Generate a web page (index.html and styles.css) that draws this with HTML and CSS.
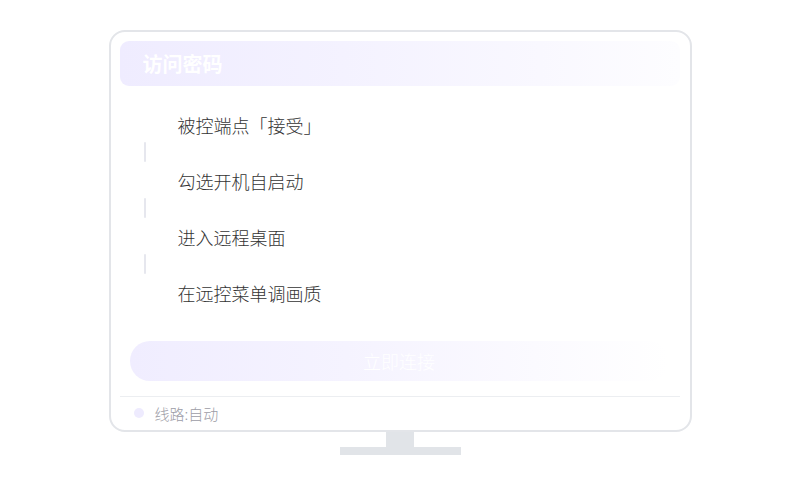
FILE: index.html
```html
<!DOCTYPE html>
<html lang="zh">
<head>
<meta charset="utf-8">
<link rel="stylesheet" href="styles.css">
</head>
<body>
<div class="page">
  <div class="monitor">
    <div class="pwd-bar"><span class="pwd-label">访问密码</span></div>
    <div class="steps">
      <div class="step">被控端点「接受」</div>
      <div class="connector"><span class="line"></span></div>
      <div class="step">勾选开机自启动</div>
      <div class="connector"><span class="line"></span></div>
      <div class="step">进入远程桌面</div>
      <div class="connector"><span class="line"></span></div>
      <div class="step">在远控菜单调画质</div>
    </div>
    <div class="connect-btn">立即连接</div>
    <div class="divider"></div>
    <div class="footer"><span class="dot"></span><span class="route">线路:自动</span></div>
  </div>
  <div class="neck"></div>
  <div class="base"></div>
</div>
</body>
</html>
```
FILE: styles.css
```css
* { box-sizing: border-box; }
html, body { margin: 0; padding: 0; background: #ffffff; }
body { font-family: "Noto Sans CJK SC", "Noto Sans", sans-serif; }
.page {
  width: 800px;
  height: 500px;
  display: flex;
  flex-direction: column;
  align-items: center;
  padding-top: 30px;
}
.monitor {
  width: 583px;
  height: 402px;
  border: 2px solid #e3e5e9;
  border-radius: 16px;
  padding: 9px 10px 0 9px;
  display: flex;
  flex-direction: column;
  background: #fff;
}
.pwd-bar {
  height: 45px;
  border-radius: 9px;
  background: linear-gradient(90deg, #efecff 0%, #f4f2ff 40%, #f9f8ff 75%, #fdfdff 100%);
  display: flex;
  align-items: center;
  padding-left: 23px;
}
.pwd-label {
  color: #ffffff;
  font-size: 20px;
  font-weight: 700;
}
.steps {
  margin-top: 27px;
  display: flex;
  flex-direction: column;
  padding-left: 58px;
}
.step {
  height: 24px;
  line-height: 24px;
  font-size: 18px;
  font-weight: 300;
  color: #333333;
}
.connector {
  height: 32px;
  position: relative;
}
.line {
  position: absolute;
  left: -34px;
  top: 5px;
  width: 2px;
  height: 20px;
  background: #e6e7ee;
  border-radius: 1px;
}
.connect-btn {
  margin: 36px 11px 0 10px;
  height: 40px;
  border-radius: 20px;
  background: linear-gradient(90deg, #f0edff 0%, #f5f3ff 40%, #fbfaff 75%, #ffffff 100%);
  color: #ffffff;
  font-size: 18px;
  font-weight: 300;
  display: flex;
  align-items: center;
  justify-content: center;
}
.divider {
  margin-top: 15px;
  height: 1px;
  background: #eceef1;
}
.footer {
  height: 32px;
  display: flex;
  align-items: center;
  padding-left: 14px;
}
.dot {
  width: 10px;
  height: 10px;
  border-radius: 50%;
  background: #eeebfe;
  margin-right: 11px;
}
.route {
  font-size: 15px;
  font-weight: 300;
  color: #9c9ca6;
}
.neck {
  width: 28px;
  height: 15px;
  background: #e1e4e8;
}
.base {
  width: 121px;
  height: 8px;
  background: #e1e4e8;
}
```
